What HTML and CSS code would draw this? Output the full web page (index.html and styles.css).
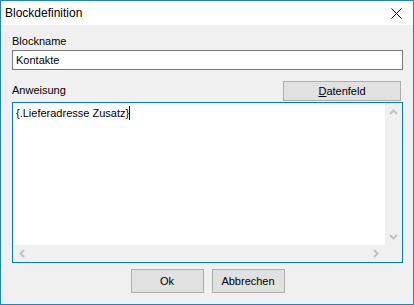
FILE: index.html
```html
<!DOCTYPE html>
<html lang="de">
<head>
  <meta charset="UTF-8" />
  <title>Blockdefinition</title>
  <link rel="stylesheet" href="styles.css">
</head>
<body>
  <div class="window">
    <div class="titlebar">
      <span class="title">Blockdefinition</span>
      <span class="close">
        <svg width="11" height="11" viewBox="0 0 11 11"><path d="M0.5 0.5 L10.5 10.5 M10.5 0.5 L0.5 10.5" stroke="#000" stroke-width="1" fill="none"/></svg>
      </span>
    </div>

    <div class="content">
      <div class="label first">Blockname</div>
      <div class="input">Kontakte</div>

      <div class="row">
        <div class="label">Anweisung</div>
        <div class="btn field-btn"><u>D</u>atenfeld</div>
      </div>

      <div class="memo">
        <div class="memo-text">{.Lieferadresse Zusatz}<span class="caret"></span></div>
        <div class="vscroll">
          <svg width="9" height="6" viewBox="0 0 9 6"><path d="M1 5 L4.5 1.5 L8 5" stroke="#c2c2c2" stroke-width="2" fill="none"/></svg>
          <svg width="9" height="6" viewBox="0 0 9 6"><path d="M1 1 L4.5 4.5 L8 1" stroke="#c2c2c2" stroke-width="2" fill="none"/></svg>
        </div>
        <div class="hscroll">
          <svg width="6" height="9" viewBox="0 0 6 9"><path d="M5 1 L1.5 4.5 L5 8" stroke="#c2c2c2" stroke-width="2" fill="none"/></svg>
          <svg width="6" height="9" viewBox="0 0 6 9"><path d="M1 1 L4.5 4.5 L1 8" stroke="#c2c2c2" stroke-width="2" fill="none"/></svg>
        </div>
        <div class="corner"></div>
      </div>

      <div class="actions">
        <div class="btn action-btn">Ok</div>
        <div class="btn action-btn">Abbrechen</div>
      </div>
    </div>
  </div>
</body>
</html>
```

FILE: styles.css
```css
* { margin: 0; padding: 0; box-sizing: border-box; }
html, body {
  width: 100%;
  height: 100%;
  overflow: hidden;
  background: #f0f0f0;
  font-family: "Liberation Sans", Arial, sans-serif;
  font-size: 11px;
  color: #000;
}

.window {
  width: 414px;
  height: 305px;
  border: 1px solid #1883d7;
  display: flex;
  flex-direction: column;
}

.titlebar {
  height: 24px;
  background: #fff;
  display: flex;
  align-items: center;
  justify-content: space-between;
  padding: 0 11px 0 4px;
}

.title { font-size: 12px; }
.close { display: flex; }

.content {
  flex: 1;
  background: #f0f0f0;
  padding: 9px 10px 0 11px;
  display: flex;
  flex-direction: column;
}

.label { line-height: 15px; }
.label.first { margin-bottom: 1px; }

.input {
  height: 20px;
  border: 1px solid #7a7a7a;
  background: #fff;
  padding: 0 3px;
  line-height: 18px;
}

.row {
  display: flex;
  justify-content: space-between;
  align-items: flex-end;
  margin-top: 11px;
  padding-right: 2px;
}
.row .label { margin-bottom: 3px; }

.btn {
  background: #e1e1e1;
  border: 1px solid #adadad;
  display: flex;
  align-items: center;
  justify-content: center;
}

.field-btn {
  width: 118px;
  height: 20px;
}

.memo {
  margin-top: 1px;
  height: 161px;
  border: 1px solid #0078d7;
  background: #fff;
  display: grid;
  grid-template-columns: 1fr 17px;
  grid-template-rows: 1fr 17px;
}

.memo-text {
  padding: 3px 3px;
  line-height: 15px;
}

.caret {
  display: inline-block;
  width: 1px;
  height: 14px;
  background: #000;
  vertical-align: -3px;
}

.vscroll {
  background: #f0f0f0;
  display: flex;
  flex-direction: column;
  justify-content: space-between;
  align-items: center;
  padding: 6px 0 5px;
}

.hscroll {
  background: #f0f0f0;
  display: flex;
  justify-content: space-between;
  align-items: center;
  padding: 0 6px;
}

.corner { background: #f0f0f0; }

.actions {
  display: flex;
  justify-content: center;
  gap: 8px;
  margin-top: 6px;
}

.action-btn {
  width: 73px;
  height: 24px;
}
```
